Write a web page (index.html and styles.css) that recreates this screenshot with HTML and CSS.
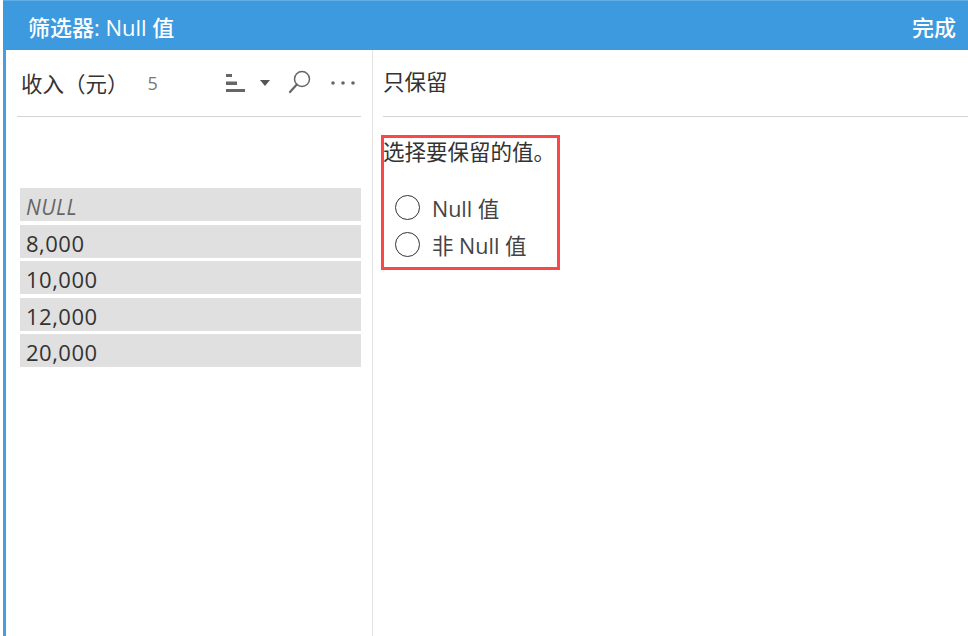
FILE: index.html
```html
<!DOCTYPE html>
<html lang="zh">
<head>
<meta charset="utf-8">
<title>筛选器: Null 值</title>
<link rel="stylesheet" href="styles.css">
</head>
<body>
<div class="dialog">
  <header class="titlebar">
    <span class="title">筛选器: Null 值</span>
    <span class="done">完成</span>
  </header>
  <div class="panes">
    <section class="left">
      <div class="left-head">
        <span class="field">收入（元）</span>
        <span class="count">5</span>
        <span class="tools">
          <svg class="icon-sort" width="20" height="20" viewBox="0 0 20 20"><path d="M0 1h6v3H0zM0 8.500h11v3.500H0zM0 16h19v3H0z" fill="#666"/></svg>
          <svg class="icon-caret" width="10" height="6" viewBox="0 0 10 6"><path d="M0 0h10L5 6z" fill="#555"/></svg>
          <svg class="icon-search" width="24" height="24" viewBox="0 0 24 24"><circle cx="14" cy="9" r="7.500" fill="none" stroke="#666" stroke-width="1.500"/><path d="M8.800 14.500 2 22" fill="none" stroke="#666" stroke-width="2.200" stroke-linecap="round"/></svg>
          <svg class="icon-more" width="24" height="4" viewBox="0 0 24 4"><circle cx="2" cy="2" r="1.800" fill="#666"/><circle cx="12" cy="2" r="1.800" fill="#666"/><circle cx="22" cy="2" r="1.800" fill="#666"/></svg>
        </span>
      </div>
      <ul class="values">
        <li class="null">NULL</li>
        <li>8,000</li>
        <li>10,000</li>
        <li>12,000</li>
        <li>20,000</li>
      </ul>
    </section>
    <section class="right">
      <div class="right-head">只保留</div>
      <div class="callout">
        <p class="prompt">选择要保留的值。</p>
        <div class="option"><span class="radio"></span><span>Null 值</span></div>
        <div class="option"><span class="radio"></span><span>非 Null 值</span></div>
      </div>
    </section>
  </div>
</div>
</body>
</html>
```

FILE: styles.css
```css
* { box-sizing: border-box; }
html, body { margin: 0; height: 100%; overflow: hidden; background: #fff; }
body {
  font-family: "Open Sans", "Noto Sans CJK SC", sans-serif;
  color: #333;
}
.dialog {
  width: 968px;
  height: 636px;
  margin-left: 3px;
  border-left: 3px solid #4a9de0;
  display: flex;
  flex-direction: column;
}
.titlebar {
  height: 50px;
  margin-left: -3px;
  background: #3d9ade;
  border-top: 1px solid #62aee6;
  color: #fff;
  display: flex;
  align-items: center;
  justify-content: space-between;
  padding: 0 12px 0 25px;
  font-size: 22px;
  font-weight: 500;
  width: 965px;
}
.panes { flex: 1; display: flex; }
.left {
  width: 367px;
  border-right: 1px solid #e4e4e4;
  padding: 0 11px 0 11px;
}
.left-head {
  height: 67px;
  border-bottom: 1px solid #d4d4d4;
  display: flex;
  align-items: center;
  padding: 0 6px 1px 4px;
  font-size: 21.500px;
}
.field { color: #333; }
.count { margin-left: 19px; font-size: 18px; color: #777; padding-top: 1px; }
.tools { margin-left: auto; display: flex; align-items: center; padding-top: 1px; }
.icon-caret { margin-left: 14px; margin-top: -1px; }
.icon-search { margin-left: 18px; margin-top: -2px; }
.icon-more { margin-left: 19px; }
.values {
  list-style: none;
  margin: 71px 0 0 3px;
  padding: 0;
  display: flex;
  flex-direction: column;
  gap: 3.600px;
}
.values li {
  height: 33px;
  background: #e0e0e0;
  padding-left: 6px;
  font-size: 22px;
  letter-spacing: 0.500px;
  line-height: 36px;
  color: #333;
}
.values .null { font-style: italic; color: #666; font-size: 21px; line-height: 38px; }
.right { flex: 1; padding-left: 10px; }
.right-head {
  height: 67px;
  border-bottom: 1px solid #d4d4d4;
  display: flex;
  align-items: center;
  font-size: 21.500px;
  padding-bottom: 5px;
}
.callout {
  width: 179px;
  height: 135px;
  margin: 18px 0 0 -2px;
  border: 3px solid #fb4747;
}
.prompt {
  margin: 0 0 0 -1px;
  font-size: 21.500px;
  line-height: 28px;
}
.option {
  display: flex;
  align-items: center;
  height: 37px;
  padding-left: 11px;
  font-size: 21.500px;
  color: #444;
  gap: 12px;
}
.prompt + .option { margin-top: 23px; }
.radio {
  width: 25px;
  height: 25px;
  border: 1px solid #333;
  border-radius: 50%;
  flex: none;
}
```
